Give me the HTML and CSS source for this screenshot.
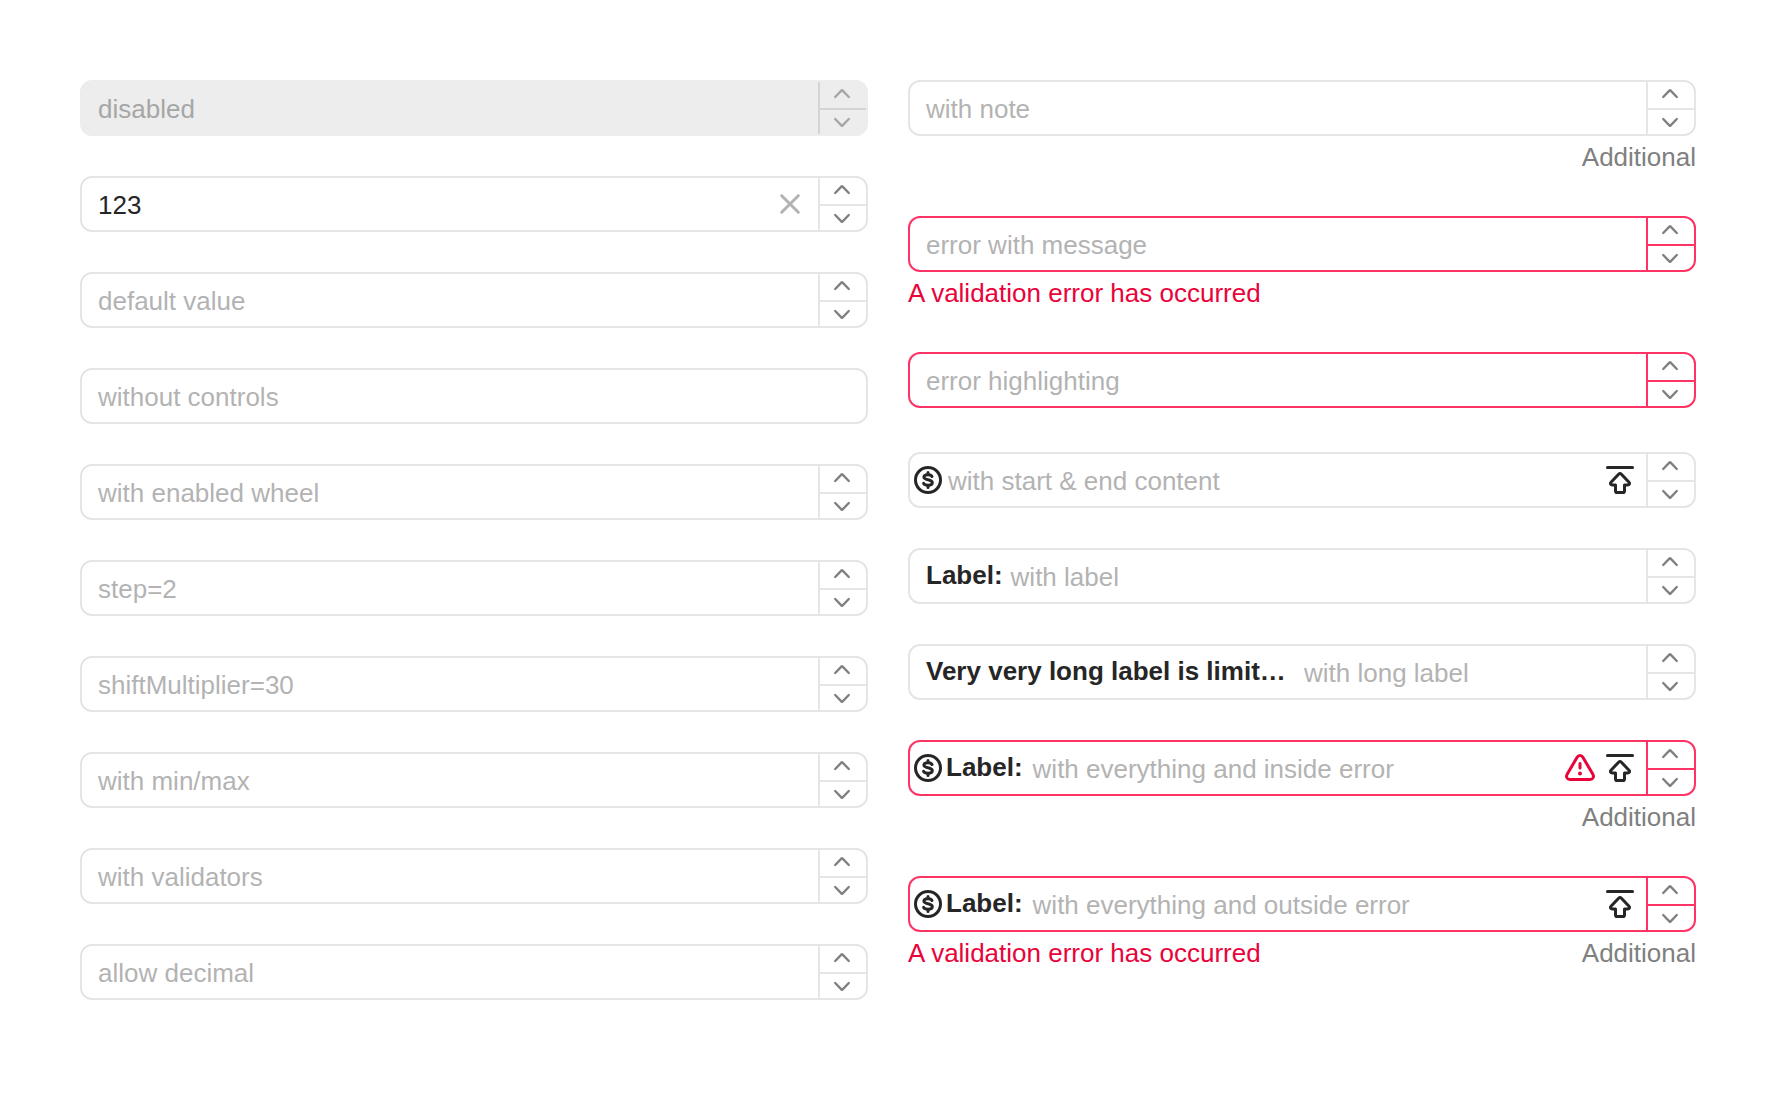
FILE: index.html
```html
<!DOCTYPE html>
<html lang="en">
<head>
<meta charset="utf-8">
<title>NumberInput</title>
<link rel="stylesheet" href="styles.css">
</head>
<body>
<svg class="sprite" aria-hidden="true">
  <symbol id="steppers" viewBox="0 0 46 52">
    <path d="M15.200 15 21.600 8.400q.4-.4.8 0L28.800 15M15.200 37 21.600 43.600q.4.4.8 0L28.800 37" fill="none" stroke="currentColor" stroke-width="2.400" stroke-linecap="round"/>
  </symbol>
  <symbol id="cross" viewBox="0 0 32 32">
    <path d="m7.700 7.700 16.600 16.600M24.300 7.700 7.700 24.300" fill="none" stroke="currentColor" stroke-width="3" stroke-linecap="round"/>
  </symbol>
  <symbol id="dollar" viewBox="0 0 16 16">
    <g fill="none" stroke="currentColor" stroke-linecap="round" stroke-linejoin="round">
      <circle cx="8" cy="8" r="6.250" stroke-width="1.500"/>
      <path d="M10 6.250C9.700 5.700 9 5.400 8 5.400c-1.300 0-2.050.45-2.050 1.150 0 .8.8 1.100 2.050 1.350s2.150.6 2.150 1.450c0 .85-.85 1.250-2.150 1.250-1.100 0-1.900-.35-2.200-.95" stroke-width="1.500"/>
      <path d="M8 4.250v1M8 10.750v1" stroke-width="1.500"/>
    </g>
  </symbol>
  <symbol id="upload" viewBox="0 0 16 16">
    <path d="M1.750 1.750h12.500M7.300 5.100 3.500 9.100c-.6.700-.15 1.450.65 1.450h1.600v2.900c0 .5.300.8.800.8h2.900c.5 0 .8-.3.800-.8V10.550h1.600c.8 0 1.250-.75.650-1.450L8.700 5.100q-.7-.7-1.400 0Z" fill="none" stroke="currentColor" stroke-width="1.500" stroke-linecap="round" stroke-linejoin="round"/>
  </symbol>
  <symbol id="warning" viewBox="0 0 16 16">
    <path d="M6.500 2.700 1.500 11.300c-.6 1.100.1 2.450 1.400 2.450h10.200c1.300 0 2-1.350 1.400-2.450L9.500 2.700c-.7-1.250-2.300-1.250-3 0Z" fill="none" stroke="currentColor" stroke-width="1.500"/>
    <path d="M8 5.750v2.200" stroke="currentColor" stroke-width="1.500" stroke-linecap="round"/>
    <circle cx="8" cy="10.750" r="1" fill="currentColor"/>
  </symbol>
</svg>
<main class="showcase">
  <section class="column">
    <div class="box disabled"><span class="text">disabled</span><span class="controls"><svg><use href="#steppers"/></svg></span></div>
    <div class="box"><span class="text value">123</span><svg class="icon clear"><use href="#cross"/></svg><span class="controls"><svg><use href="#steppers"/></svg></span></div>
    <div class="box"><span class="text">default value</span><span class="controls"><svg><use href="#steppers"/></svg></span></div>
    <div class="box"><span class="text">without controls</span></div>
    <div class="box"><span class="text">with enabled wheel</span><span class="controls"><svg><use href="#steppers"/></svg></span></div>
    <div class="box"><span class="text">step=2</span><span class="controls"><svg><use href="#steppers"/></svg></span></div>
    <div class="box"><span class="text">shiftMultiplier=30</span><span class="controls"><svg><use href="#steppers"/></svg></span></div>
    <div class="box"><span class="text">with min/max</span><span class="controls"><svg><use href="#steppers"/></svg></span></div>
    <div class="box"><span class="text">with validators</span><span class="controls"><svg><use href="#steppers"/></svg></span></div>
    <div class="box"><span class="text">allow decimal</span><span class="controls"><svg><use href="#steppers"/></svg></span></div>
  </section>
  <section class="column">
    <div class="field">
      <div class="box"><span class="text">with note</span><span class="controls"><svg><use href="#steppers"/></svg></span></div>
      <div class="footer"><span class="note">Additional</span></div>
    </div>
    <div class="field">
      <div class="box invalid"><span class="text">error with message</span><span class="controls"><svg><use href="#steppers"/></svg></span></div>
      <div class="footer"><span class="message">A validation error has occurred</span></div>
    </div>
    <div class="field">
      <div class="box invalid"><span class="text">error highlighting</span><span class="controls"><svg><use href="#steppers"/></svg></span></div>
      <div class="footer"></div>
    </div>
    <div class="box with-start"><svg class="icon"><use href="#dollar"/></svg><span class="text">with start &amp; end content</span><svg class="icon end"><use href="#upload"/></svg><span class="controls"><svg><use href="#steppers"/></svg></span></div>
    <div class="box"><span class="label">Label:</span><span class="text">with label</span><span class="controls"><svg><use href="#steppers"/></svg></span></div>
    <div class="box"><span class="label long">Very very long label is limit…</span><span class="text">with long label</span><span class="controls"><svg><use href="#steppers"/></svg></span></div>
    <div class="field">
      <div class="box invalid with-start"><svg class="icon"><use href="#dollar"/></svg><span class="label">Label:</span><span class="text">with everything and inside error</span><svg class="icon alert"><use href="#warning"/></svg><svg class="icon end"><use href="#upload"/></svg><span class="controls"><svg><use href="#steppers"/></svg></span></div>
      <div class="footer"><span class="note">Additional</span></div>
    </div>
    <div class="field">
      <div class="box invalid with-start"><svg class="icon"><use href="#dollar"/></svg><span class="label">Label:</span><span class="text">with everything and outside error</span><svg class="icon end"><use href="#upload"/></svg><span class="controls"><svg><use href="#steppers"/></svg></span></div>
      <div class="footer"><span class="message">A validation error has occurred</span><span class="note">Additional</span></div>
    </div>
  </section>
</main>
</body>
</html>
```
FILE: styles.css
```css
* { box-sizing: border-box; }
body {
  margin: 0;
  background: #fff;
  color: #262626;
  font: 26px/36px "Liberation Sans", Arial, sans-serif;
}
.sprite { display: none; }
.showcase {
  display: grid;
  grid-template-columns: 1fr 1fr;
  gap: 40px;
  padding: 80px;
}
.column {
  display: flex;
  flex-direction: column;
  gap: 40px;
  min-width: 0;
}
.box {
  --line: #e5e5e5;
  display: flex;
  align-items: center;
  height: 56px;
  border: 2px solid var(--line);
  border-radius: 12px;
}
.invalid { --line: #ff3364; }
.text {
  flex: 1;
  min-width: 0;
  padding: 2px 0 0 16px;
  white-space: nowrap;
  color: #b3b3b3;
}
.value { color: #262626; }
.label {
  padding: 0 0 2px 16px;
  font-weight: 700;
  white-space: nowrap;
}
.label.long { width: 376px; }
.label + .text { padding-left: 8px; }
.label.long + .text { padding-left: 18px; }
.controls {
  flex: none;
  align-self: stretch;
  width: 48px;
  border-left: 2px solid var(--line);
  color: #808080;
  background: linear-gradient(var(--line), var(--line)) 0 26px / 100% 2px no-repeat;
}
.controls svg {
  display: block;
  width: 46px;
  height: 52px;
}
.icon {
  flex: none;
  width: 32px;
  height: 32px;
}
.clear {
  margin-right: 12px;
  color: #b3b3b3;
}
.end { margin-right: 10px; }
.alert {
  margin-right: 8px;
  color: #e9033a;
}
.with-start { padding-left: 2px; }
.with-start .icon + .text { padding-left: 4px; }
.with-start .label { padding-left: 2px; }
.with-start .label + .text { padding-left: 10px; }
.disabled {
  border-color: #ededed;
  background: #ededed;
  --line: #d4d4d4;
}
.disabled .text,
.disabled .controls { color: #a6a6a6; }
.footer {
  display: flex;
  justify-content: space-between;
  padding: 3px 0 1px;
}
.footer:empty { padding: 4px 0 0; }
.note {
  margin-left: auto;
  color: #808080;
}
.message { color: #e9033a; }
```
